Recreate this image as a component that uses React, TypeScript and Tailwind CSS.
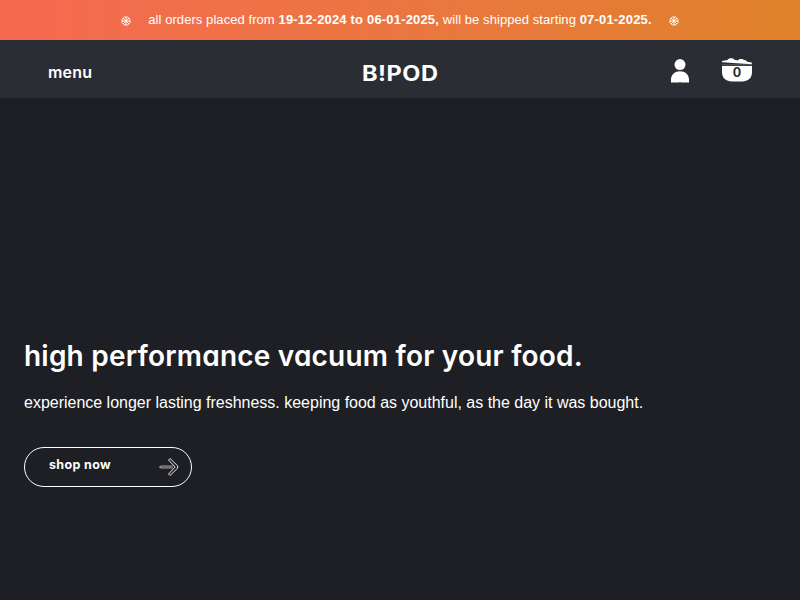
import { ReactNode } from "react";

function Snowflake() {
  return (
    <svg viewBox="0 0 10 10" className="w-[10px] h-[10px] mt-px" fill="none" stroke="white" strokeLinecap="round">
      <path d="M5 .8v8.400M.8 5h8.400M2.300 2.300l5.400 5.400M7.700 2.300 2.300 7.700" strokeWidth=".9" />
      <path
        d="M3.800.8 5 1.800 6.200.8M3.800 9.200 5 8.200l1.200 1M.8 3.800l1 1.200-1 1.200M9.200 3.800 8.200 5l1 1.200M1.500 2.800l1.100-.2.200-1.100M8.500 2.800l-1.100-.2-.2-1.100M1.500 7.200l1.100.2.200 1.100M8.500 7.200l-1.100.2-.2 1.100"
        strokeWidth="1"
      />
    </svg>
  );
}

function Rounded({ className, children }: { className: string; children: ReactNode }) {
  return (
    <span className={`font-['Inter',sans-serif] [font-feature-settings:'cv11'] whitespace-nowrap ${className}`}>
      {children}
    </span>
  );
}

export default function App() {
  return (
    <div className="w-full h-screen flex flex-col overflow-hidden bg-[#1e1f24] text-white font-['Liberation_Sans',sans-serif]">
      {/* Announcement */}
      <div className="h-10 shrink-0 flex items-center justify-center gap-[17px] bg-linear-to-r from-[#f66951] to-[#df8129]">
        <Snowflake />
        <p className="text-[13px] leading-5 tracking-[0.07px] whitespace-nowrap">
          all orders placed from <b className="tracking-[0.18px]">19-12-2024 to 06-01-2025,</b> will be shipped starting{" "}
          <b className="tracking-[0.18px]">07-01-2025.</b>
        </p>
        <Snowflake />
      </div>

      {/* Header */}
      <header className="h-[58px] shrink-0 grid grid-cols-3 items-center px-12 bg-[#2a2d34]">
        <a href="#" className="pt-[6px] leading-6">
          <Rounded className="text-[16px] font-semibold tracking-[0.2px]">menu</Rounded>
        </a>
        <a href="#" className="pt-[11px] pl-px leading-6 text-center">
          <Rounded className="inline-block scale-x-112 text-[21px] font-bold tracking-[0.5px]">B!POD</Rounded>
        </a>
        <div className="flex items-center justify-end gap-8 pt-[3px]">
          <svg viewBox="0 0 20 24" className="w-5 h-6" fill="white">
            <circle cx="10" cy="5.6" r="5.5" />
            <path d="M1 23.500v-3C1 15.600 5 12.200 10 12.200s9 3.400 9 8.300v3h-8q-1-1-2 0z" />
          </svg>
          <div className="relative w-[30px] h-6 -mt-px">
            <svg viewBox="0 0 30 24" className="w-[30px] h-6" fill="white">
              <path d="M0 3 5.500 2C6.500-.1 11-.2 12.500 1.700l3.500.8C17 .6 20.500.7 22 2c1.800-.1 2.500.8 3 1.700l4.800.8v1.700L0 4.200z" />
              <path d="M0 8h30v6c0 6-4 9.500-10 9.500H10C4 23.500 0 20 0 14z" />
              <path d="M0 6.900h30" stroke="white" strokeWidth=".25" />
            </svg>
            <span className="absolute left-0 top-[8px] w-full text-center text-[12.500px] leading-[14px] font-bold text-[#2a2d34] font-['Inter',sans-serif]">
              0
            </span>
          </div>
        </div>
      </header>

      {/* Hero */}
      <main className="flex-1 px-6 pt-[238px]">
        <h1 className="leading-10">
          <Rounded className="text-[28px] font-semibold tracking-[0.21px]">high performance vacuum for your food.</Rounded>
        </h1>
        <p className="mt-2.5 text-[16px] leading-6 tracking-[-0.01px] whitespace-nowrap">
          experience longer lasting freshness. keeping food as youthful, as the day it was bought.
        </p>
        <a href="#" className="mt-8 w-[168px] h-10 flex items-center justify-between border border-white rounded-full pl-6 pr-3">
          <Rounded className="text-[12.500px] font-bold tracking-[0.35px] pb-1">shop now</Rounded>
          <svg viewBox="0 0 20 20" className="w-5 h-5" fill="none" stroke="white" strokeWidth=".9">
            <path d="M1.500 9h12M1.500 11h12" stroke="#c4c4c6" strokeWidth=".8" />
            <path d="M1.500 9q-1.500 1 0 2" />
            <path d="M1.500 10h12.500" stroke="#77787b" strokeWidth="1.500" />
            <path d="m9.500 3 1.500-1.500 7.500 7.200q.8 1.300 0 2.600L11 18.500 9.500 17l6.600-7z" />
          </svg>
        </a>
      </main>
    </div>
  );
}
